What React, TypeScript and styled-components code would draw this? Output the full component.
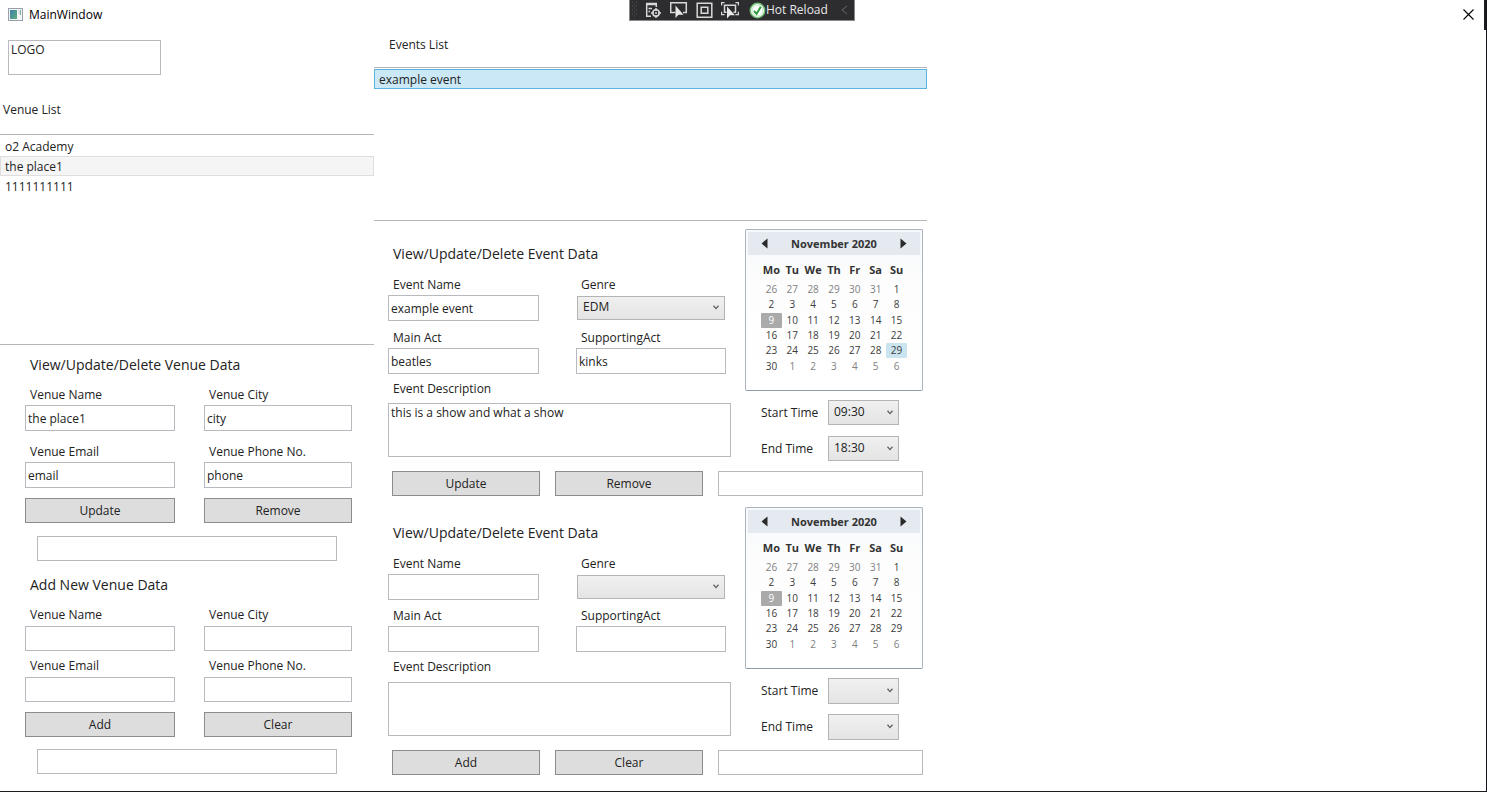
import React, { useId, useState } from "react";
import styled, { createGlobalStyle, css } from "styled-components";

const GlobalStyle = createGlobalStyle`
  *, *::before, *::after { box-sizing: border-box; }
  body { margin: 0; background: #fff; }
  body, button, input, select, textarea {
    font-family: "Open Sans", "Noto Sans", sans-serif;
    font-size: 12px;
    line-height: 16px;
    color: #222;
  }
`;

const Window = styled.div`
  position: relative;
  display: flex;
  flex-direction: column;
  min-height: 100vh;
  border-right: 1px solid #141418;
  border-bottom: 1px solid #1c1c20;
  background: #fff;
`;

const TitleBar = styled.header`
  display: flex;
  align-items: flex-start;
  gap: 6px;
  height: 30px;
  padding-left: 8px;
  border-right: 2px solid #1c1c20;
  color: #000;

  > svg {
    margin-top: 8px;
  }
`;

const AppTitle = styled.h1`
  flex: 1;
  margin: 0;
  font-size: 12px;
  font-weight: 400;
  line-height: 30px;
`;

const CloseButton = styled.button`
  display: flex;
  align-items: center;
  justify-content: center;
  width: 32px;
  height: 28px;
  padding: 0;
  border: 0;
  background: none;
`;

const DebugBar = styled.div`
  position: absolute;
  top: 0;
  left: 50%;
  display: flex;
  align-items: center;
  width: 226px;
  height: 21px;
  margin-left: -114px;
  padding: 0 6px 0 1px;
  border: 1px solid #8a8a8c;
  border-top: 0;
  background: #2d2d30;
`;

const ToolButton = styled.button`
  display: flex;
  padding: 0;
  margin-left: 8px;
  border: 0;
  background: none;
`;

const HotReload = styled.button`
  display: flex;
  flex: 1;
  align-items: center;
  gap: 0;
  margin-left: 10px;
  padding: 0;
  border: 0;
  background: none;
  color: #e8e8e8;
  white-space: nowrap;
`;

const Columns = styled.main`
  display: grid;
  flex: 1;
  grid-template-columns: minmax(0, 374fr) minmax(0, 553fr) minmax(0, 559fr);
  align-items: start;
`;

const Column = styled.section`
  display: flex;
  flex-direction: column;
`;

const LogoBox = styled.input`
  width: 153px;
  height: 35px;
  margin: 10px 0 0 8px;
  padding: 0 2px 16px;
  border: 1px solid #b8bac0;
  outline: 0;
`;

const ListCaption = styled.h2<{ $top: number; $left: number; $bottom: number }>`
  margin: ${(p) => `${p.$top}px 0 ${p.$bottom}px ${p.$left}px`};
  font-size: 12px;
  font-weight: 400;
  line-height: 18px;
`;

const ListBox = styled.ul<{ $height: number }>`
  height: ${(p) => p.$height}px;
  margin: 0;
  padding: 1px 0;
  border: 1px solid #b4b5ba;
  border-width: 1px 0;
  list-style: none;
`;

const ListItem = styled.li<{ $state?: "active" | "inactive" }>`
  height: 20px;
  padding: 1px 4px 0;
  border: 1px solid transparent;
  line-height: 18px;
  ${(p) =>
    p.$state === "active" &&
    css`
      background: #cbe8f6;
      border-color: #5bb4de;
    `}
  ${(p) =>
    p.$state === "inactive" &&
    css`
      background: #f5f5f5;
      border-color: #dedede;
    `}
`;

const Heading = styled.h3`
  margin: 0;
  padding-left: 5px;
  font-size: 14px;
  font-weight: 400;
  line-height: 20px;
`;

const VenueForm = styled.form<{ $top: number }>`
  padding: ${(p) => p.$top}px 22px 0 25px;
`;

const FieldRow = styled.div<{ $top: number; $cols: string; $gap: number }>`
  display: grid;
  grid-template-columns: ${(p) => p.$cols};
  column-gap: ${(p) => p.$gap}px;
  margin-top: ${(p) => p.$top}px;
`;

const FieldBox = styled.div`
  display: flex;
  flex-direction: column;
`;

const Label = styled.label<{ $height?: number; $gap?: number }>`
  height: ${(p) => p.$height ?? 18}px;
  margin-bottom: ${(p) => p.$gap ?? 1}px;
  padding-left: 5px;
  line-height: ${(p) => p.$height ?? 18}px;
`;

const TextBox = styled.input<{ $height?: number }>`
  width: 100%;
  height: ${(p) => p.$height ?? 26}px;
  padding: 1px 2px 0;
  border: 1px solid #b8bac0;
  outline: 0;
  background: #fff;
`;

const TextArea = styled.textarea`
  display: block;
  width: 100%;
  height: 54px;
  padding: 1px 2px;
  border: 1px solid #b8bac0;
  outline: 0;
  resize: none;
`;

const PushButton = styled.button`
  height: 25px;
  padding: 0;
  border: 1px solid #8c8c8c;
  background: #ddd;
`;

const VenueStatus = styled.div<{ $top: number }>`
  padding: ${(p) => p.$top}px 15px 0 12px;
`;

const SelectBox = styled.div<{ $height: number }>`
  position: relative;
  height: ${(p) => p.$height}px;

  select {
    width: 100%;
    height: 100%;
    padding: 0 16px 2px 5px;
    appearance: none;
    border: 1px solid #b4b4b4;
    border-radius: 0;
    outline: 0;
    background: linear-gradient(#f0f0f0, #e4e4e4);
  }

  svg {
    position: absolute;
    top: calc(50% - 4px);
    right: 5px;
    pointer-events: none;
  }
`;

const GenreSlot = styled.div`
  padding: 1px;
`;

const EventForm = styled.form<{ $after: number }>`
  padding: 8px 4px ${(p) => p.$after}px 14px;
`;

const EventTop = styled.div`
  display: grid;
  grid-template-columns: minmax(0, 343fr) minmax(0, 178fr);
  column-gap: 14px;
`;

const EventFields = styled.div<{ $top: number }>`
  padding-top: ${(p) => p.$top}px;
`;

const HalfFields = styled.div`
  padding-right: 5px;
`;

const ActionRow = styled.div`
  display: grid;
  grid-template-columns: minmax(0, 148fr) minmax(0, 148fr) minmax(0, 205fr);
  column-gap: 15px;
  margin-top: 10px;
  padding-left: 4px;
`;

const SideColumn = styled.div`
  display: flex;
  flex-direction: column;
`;

const TimeRow = styled.div<{ $top: number }>`
  display: flex;
  align-items: center;
  justify-content: space-between;
  margin-top: ${(p) => p.$top}px;
  padding: 0 24px 0 16px;

  > div {
    width: 71px;
  }
`;

const CalendarFrame = styled.div`
  height: 162px;
  padding: 2px;
  border: 1px solid #a9b4c0;
  border-bottom-color: #8e9cab;
  border-radius: 2px;
  background: linear-gradient(#f6f8fa, #fdfdfd 35%, #fff);
`;

const CalendarHeader = styled.div`
  display: flex;
  align-items: center;
  justify-content: space-between;
  height: 23px;
  padding: 0 13px 0 13px;
  background: #e4eaf0;
  font-size: 11px;
  font-weight: 700;
  color: #333;

  button {
    display: flex;
    padding: 0;
    border: 0;
    background: none;
  }
`;

const CalendarGrid = styled.table`
  width: 146px;
  height: 117px;
  margin: 2px auto 0;
  border-collapse: collapse;
  table-layout: fixed;

  th {
    height: 25px;
    padding: 0;
    font-size: 11px;
    line-height: 14px;
    color: #333;
  }

  td {
    padding: 0;
  }
`;

const Day = styled.button<{ $tone: "normal" | "muted" | "selected" | "today" }>`
  display: block;
  width: 100%;
  height: 15px;
  padding: 0;
  border: 0;
  border-radius: 1px;
  font-size: 10px;
  line-height: 15px;
  background: ${(p) =>
    p.$tone === "today" ? "#aaa" : p.$tone === "selected" ? "#cbe5f0" : "none"};
  color: ${(p) =>
    p.$tone === "today" ? "#fff" : p.$tone === "muted" ? "#808080" : "#3c3c3c"};
`;

const Chevron = () => (
  <svg width="8" height="7" viewBox="0 0 8 7" aria-hidden="true">
    <path d="M1.5 1.8 4 4.6 6.5 1.8" fill="none" stroke="#606060" strokeWidth="1.3" />
  </svg>
);

type FieldProps = {
  label: string;
  value?: string;
  height?: number;
  labelHeight?: number;
};

function Field({ label, value = "", height, labelHeight }: FieldProps) {
  const id = useId();
  return (
    <FieldBox>
      <Label htmlFor={id} $height={labelHeight}>
        {label}
      </Label>
      <TextBox id={id} type="text" defaultValue={value} $height={height} />
    </FieldBox>
  );
}

type ComboProps = { id: string; value?: string; options: string[]; height: number };

function Combo({ id, value = "", options, height }: ComboProps) {
  return (
    <SelectBox $height={height}>
      <select id={id} defaultValue={value}>
        <option value="" />
        {options.map((o) => (
          <option key={o}>{o}</option>
        ))}
      </select>
      <Chevron />
    </SelectBox>
  );
}

const TIMES = ["09:30", "12:00", "18:30", "21:00"];

type TimeProps = { label: string; value?: string; top: number; height: number };

function TimePicker({ label, value, top, height }: TimeProps) {
  const id = useId();
  return (
    <TimeRow $top={top}>
      <label htmlFor={id}>{label}</label>
      <Combo id={id} value={value} options={TIMES} height={height} />
    </TimeRow>
  );
}

const WEEKDAYS = ["Mo", "Tu", "We", "Th", "Fr", "Sa", "Su"];

// Six Monday-first weeks, starting on 26 October 2020.
const WEEKS = Array.from({ length: 6 }, (_, week) =>
  Array.from({ length: 7 }, (_, day) => {
    const date = new Date(2020, 9, 26 + week * 7 + day);
    return { day: date.getDate(), inMonth: date.getMonth() === 10 };
  })
);

function Calendar({ initial }: { initial?: number }) {
  const [selected, setSelected] = useState(initial);
  return (
    <CalendarFrame>
      <CalendarHeader>
        <button type="button" aria-label="Previous month">
          <svg width="7" height="11" viewBox="0 0 7 11">
            <path d="M6.5 .5v10L.5 5.5z" fill="#2b2b2b" />
          </svg>
        </button>
        <span>November 2020</span>
        <button type="button" aria-label="Next month">
          <svg width="7" height="11" viewBox="0 0 7 11">
            <path d="M.5 .5v10l6-5z" fill="#2b2b2b" />
          </svg>
        </button>
      </CalendarHeader>
      <CalendarGrid>
        <thead>
          <tr>
            {WEEKDAYS.map((d) => (
              <th key={d} scope="col">
                {d}
              </th>
            ))}
          </tr>
        </thead>
        <tbody>
          {WEEKS.map((week, i) => (
            <tr key={i}>
              {week.map(({ day, inMonth }) => (
                <td key={day}>
                  <Day
                    type="button"
                    onClick={() => inMonth && setSelected(day)}
                    $tone={
                      !inMonth
                        ? "muted"
                        : day === 9
                          ? "today"
                          : day === selected
                            ? "selected"
                            : "normal"
                    }
                  >
                    {day}
                  </Day>
                </td>
              ))}
            </tr>
          ))}
        </tbody>
      </CalendarGrid>
    </CalendarFrame>
  );
}

type VenuePanelProps = {
  title: string;
  values?: string[];
  actions: [string, string];
  top: number;
  fieldTop: number;
  rowGap: number;
  height: number;
  labelHeight: number;
  statusGap: number;
};

function VenuePanel(p: VenuePanelProps) {
  const [name, city, email, phone] = p.values ?? [];
  const size = { height: p.height, labelHeight: p.labelHeight };
  const grid = { $cols: "minmax(0, 150fr) minmax(0, 148fr)", $gap: 29 };
  return (
    <VenueForm $top={p.top}>
      <Heading>{p.title}</Heading>
      <FieldRow {...grid} $top={p.fieldTop}>
        <Field label="Venue Name" value={name} {...size} />
        <Field label="Venue City" value={city} {...size} />
      </FieldRow>
      <FieldRow {...grid} $top={p.rowGap}>
        <Field label="Venue Email" value={email} {...size} />
        <Field label="Venue Phone No." value={phone} {...size} />
      </FieldRow>
      <FieldRow {...grid} $top={10}>
        <PushButton type="button">{p.actions[0]}</PushButton>
        <PushButton type="button">{p.actions[1]}</PushButton>
      </FieldRow>
      <VenueStatus $top={p.statusGap}>
        <TextBox readOnly aria-label={`${p.title} status`} $height={25} />
      </VenueStatus>
    </VenueForm>
  );
}

type EventPanelProps = {
  event?: { name: string; genre: string; main: string; support: string; description: string };
  times?: [string, string];
  day?: number;
  actions: [string, string];
  headingTop: number;
  fieldTop: number;
  rowGap: number;
  areaGap: number;
  timeHeight: number;
  timeGap: number;
  after: number;
};

function EventPanel(p: EventPanelProps) {
  const genreId = useId();
  const descriptionId = useId();
  const grid = { $cols: "minmax(0, 151fr) minmax(0, 150fr)", $gap: 37 };
  return (
    <EventForm $after={p.after}>
      <EventTop>
        <EventFields $top={p.headingTop}>
          <Heading>View/Update/Delete Event Data</Heading>
          <HalfFields>
            <FieldRow {...grid} $top={p.fieldTop}>
              <Field label="Event Name" value={p.event?.name} />
              <FieldBox>
                <Label htmlFor={genreId}>Genre</Label>
                <GenreSlot>
                  <Combo
                    id={genreId}
                    value={p.event?.genre}
                    options={["EDM", "Rock", "Jazz", "Pop"]}
                    height={24}
                  />
                </GenreSlot>
              </FieldBox>
            </FieldRow>
            <FieldRow {...grid} $top={p.rowGap}>
              <Field label="Main Act" value={p.event?.main} />
              <Field label="SupportingAct" value={p.event?.support} />
            </FieldRow>
          </HalfFields>
          <FieldRow $cols="minmax(0, 1fr)" $gap={0} $top={6}>
            <Label htmlFor={descriptionId} $gap={p.areaGap}>
              Event Description
            </Label>
            <TextArea id={descriptionId} defaultValue={p.event?.description} />
          </FieldRow>
        </EventFields>
        <SideColumn>
          <Calendar initial={p.day} />
          <TimePicker label="Start Time" value={p.times?.[0]} top={9} height={p.timeHeight} />
          <TimePicker label="End Time" value={p.times?.[1]} top={p.timeGap} height={p.timeHeight} />
        </SideColumn>
      </EventTop>
      <ActionRow>
        <PushButton type="button">{p.actions[0]}</PushButton>
        <PushButton type="button">{p.actions[1]}</PushButton>
        <TextBox readOnly aria-label="Event status" $height={25} />
      </ActionRow>
    </EventForm>
  );
}

function DebugToolbar() {
  const line = { fill: "none", stroke: "#d8d8d8", strokeWidth: 1.5 };
  return (
    <DebugBar>
      <svg width="6" height="18" viewBox="0 0 6 18" aria-hidden="true">
        {[1, 5, 9, 13].map((y) => (
          <path key={y} d={`M1 ${y}h1M5 ${y}h1M3 ${y + 2}h1`} stroke="#5c5c60" strokeWidth="1" />
        ))}
      </svg>
      <ToolButton type="button" aria-label="Go to Live Visual Tree">
        <svg width="17" height="18" viewBox="0 0 17 18">
          <path d="M1 3h11" stroke="#d8d8d8" strokeWidth="2.5" />
          <path d="M1.7 3v12.3H6M11.3 3v3M3.5 7.5H7M3.5 10.5H5" {...line} />
          <circle cx="11" cy="12" r="3.2" {...line} />
          <path d="M11 7v3M11 14v3M6 12h3M13 12h3" {...line} />
          <circle cx="11" cy="12" r="1" fill="#d8d8d8" />
        </svg>
      </ToolButton>
      <ToolButton type="button" aria-label="Select element">
        <svg width="18" height="18" viewBox="0 0 18 18">
          <path d="M5.5 11.5H.7V1.7h15.6v9.8H13" {...line} />
          <path d="M5.5 4.5v12.5l3-3.2h5z" fill="#e8e8e8" />
        </svg>
      </ToolButton>
      <ToolButton type="button" aria-label="Display layout adorners">
        <svg width="17" height="18" viewBox="0 0 17 18">
          <path d="M1.2 2.2h14.6v14H1.2zM5.2 6.2h6.6v6H5.2z" {...line} />
        </svg>
      </ToolButton>
      <ToolButton type="button" aria-label="Track focused element">
        <svg width="18" height="18" viewBox="0 0 18 18">
          <path d="M5.5 11.2H3.5V4.2h11v7H12.5" {...line} />
          <path
            d="M.6 4.5V1.6h3M14.4 1.6h3v2.9M.6 10.8v2.9h3M17.4 10.8v2.9h-3"
            {...line}
            strokeWidth={1.2}
          />
          <path d="M6 5.5v12l3-3.2h5z" fill="#e8e8e8" />
        </svg>
      </ToolButton>
      <HotReload type="button">
        <svg width="17" height="17" viewBox="0 0 17 17" aria-hidden="true">
          <circle cx="8.5" cy="8.5" r="7.2" fill="#fff" stroke="#6fbf73" strokeWidth="1.4" />
          <circle cx="8.5" cy="8.5" r="5.4" fill="none" stroke="#c4e3c5" />
          <path d="m5 8.8 2.6 3 4.2-7" fill="none" stroke="#2f9a3a" strokeWidth="2" />
        </svg>
        Hot Reload
      </HotReload>
      <svg width="7" height="10" viewBox="0 0 7 10" aria-hidden="true">
        <path d="M6 1 1 5l5 4" fill="none" stroke="#6a6a6e" />
      </svg>
    </DebugBar>
  );
}

export default function App() {
  return (
    <>
      <GlobalStyle />
      <Window>
        <TitleBar>
          <svg width="15" height="13" viewBox="0 0 15 13" aria-hidden="true">
            <defs>
              <linearGradient id="appIcon" x1="0" y1="0" x2="1" y2="1">
                <stop offset="0" stopColor="#3f7fa6" />
                <stop offset="1" stopColor="#5fb080" />
              </linearGradient>
            </defs>
            <rect x=".5" y=".5" width="14" height="12" fill="#f4f6f8" stroke="#9aa0aa" />
            <rect x="2" y="2" width="7" height="9" fill="url(#appIcon)" />
            <rect x="10" y="2" width="2" height="4" fill="#dfe3e8" />
            <rect x="12" y="2" width="1" height="5" fill="#7fb09a" />
          </svg>
          <AppTitle>MainWindow</AppTitle>
          <CloseButton type="button" aria-label="Close">
            <svg width="11" height="11" viewBox="0 0 11 11">
              <path d="m.5 .5 10 10M10.5 .5l-10 10" stroke="#000" strokeWidth="1.1" />
            </svg>
          </CloseButton>
        </TitleBar>
        <DebugToolbar />
        <Columns>
          <Column>
            <LogoBox aria-label="Logo" defaultValue="LOGO" />
            <ListCaption $top={26} $left={3} $bottom={15}>
              Venue List
            </ListCaption>
            <ListBox $height={211}>
              <ListItem>o2 Academy</ListItem>
              <ListItem $state="inactive">the place1</ListItem>
              <ListItem>1111111111</ListItem>
            </ListBox>
            <VenuePanel
              title="View/Update/Delete Venue Data"
              values={["the place1", "city", "email", "phone"]}
              actions={["Update", "Remove"]}
              top={10}
              fieldTop={11}
              rowGap={12}
              height={26}
              labelHeight={18}
              statusGap={13}
            />
            <VenuePanel
              title="Add New Venue Data"
              actions={["Add", "Clear"]}
              top={14}
              fieldTop={10}
              rowGap={5}
              height={25}
              labelHeight={20}
              statusGap={12}
            />
          </Column>
          <Column>
            <ListCaption $top={6} $left={15} $bottom={13}>
              Events List
            </ListCaption>
            <ListBox $height={154}>
              <ListItem $state="active">example event</ListItem>
            </ListBox>
            <EventPanel
              event={{
                name: "example event",
                genre: "EDM",
                main: "beatles",
                support: "kinks",
                description: "this is a show and what a show",
              }}
              times={["09:30", "18:30"]}
              day={29}
              actions={["Update", "Remove"]}
              headingTop={15}
              fieldTop={12}
              rowGap={8}
              areaGap={5}
              timeHeight={25}
              timeGap={11}
              after={3}
            />
            <EventPanel
              actions={["Add", "Clear"]}
              headingTop={16}
              fieldTop={12}
              rowGap={7}
              areaGap={6}
              timeHeight={26}
              timeGap={10}
              after={0}
            />
          </Column>
        </Columns>
      </Window>
    </>
  );
}
